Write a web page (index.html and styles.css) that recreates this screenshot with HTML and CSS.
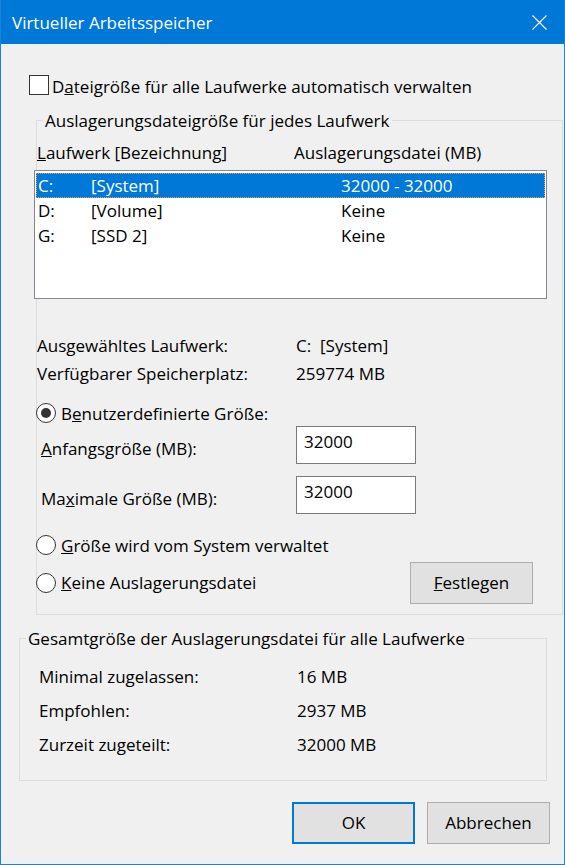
FILE: index.html
```html
<!DOCTYPE html>
<html lang="de">
<head>
    <meta charset="UTF-8">
    <meta name="viewport" content="width=device-width, initial-scale=1.0">
    <title>Virtueller Arbeitsspeicher</title>
    <link rel="stylesheet" href="styles.css">
</head>
<body>

    <div class="window">
        <div class="titlebar">
            <span class="title">Virtueller Arbeitsspeicher</span>
            <svg class="close" width="15" height="15" viewBox="0 0 15 15">
                <path d="M0.5 0.5 L14.5 14.5 M14.5 0.5 L0.5 14.5" stroke="#fff" stroke-width="1.1" fill="none"/>
            </svg>
        </div>

        <div class="auto-row">
            <span class="checkbox"></span>
            <span class="auto-label">D<u>a</u>teigröße für alle Laufwerke automatisch verwalten</span>
        </div>

        <!-- page file per drive -->
        <div class="group group-drives">
            <span class="group-title">Auslagerungsdateigröße für jedes Laufwerk</span>

            <div class="list-header">
                <span><u>L</u>aufwerk [Bezeichnung]</span>
                <span>Auslagerungsdatei (MB)</span>
            </div>

            <div class="listbox">
                <div class="list-row selected"><span>C:</span><span>[System]</span><span>32000 - 32000</span></div>
                <div class="list-row"><span>D:</span><span>[Volume]</span><span>Keine</span></div>
                <div class="list-row"><span>G:</span><span>[SSD 2]</span><span>Keine</span></div>
            </div>

            <div class="info-row first"><span>Ausgewähltes Laufwerk:</span><span>C:&nbsp; [System]</span></div>
            <div class="info-row"><span>Verfügbarer Speicherplatz:</span><span>259774 MB</span></div>

            <div class="radio-row custom">
                <span class="radio checked"></span>
                <span class="radio-label">B<u>e</u>nutzerdefinierte Größe:</span>
            </div>

            <div class="size-row first">
                <label><u>A</u>nfangsgröße (MB):</label>
                <div class="textbox">32000</div>
            </div>
            <div class="size-row">
                <label>Ma<u>x</u>imale Größe (MB):</label>
                <div class="textbox">32000</div>
            </div>

            <div class="radio-row system">
                <span class="radio"></span>
                <span class="radio-label"><u>G</u>röße wird vom System verwaltet</span>
            </div>

            <div class="radio-row none">
                <span class="radio"></span>
                <span class="radio-label"><u>K</u>eine Auslagerungsdatei</span>
                <button class="btn btn-set"><u>F</u>estlegen</button>
            </div>
        </div>

        <!-- totals -->
        <div class="group group-total">
            <span class="group-title">Gesamtgröße der Auslagerungsdatei für alle Laufwerke</span>
            <div class="total-row first"><span>Minimal zugelassen:</span><span>16 MB</span></div>
            <div class="total-row"><span>Empfohlen:</span><span>2937 MB</span></div>
            <div class="total-row"><span>Zurzeit zugeteilt:</span><span>32000 MB</span></div>
        </div>

        <div class="buttons">
            <button class="btn btn-default">OK</button>
            <button class="btn">Abbrechen</button>
        </div>
    </div>

</body>
</html>
```

FILE: styles.css
```css
body {
    margin: 0;
    font-family: "Open Sans", sans-serif;
    font-size: 17px;
    color: #000;
}

.window {
    width: 565px;
    height: 865px;
    box-sizing: border-box;
    background-color: #f0f0f0;
    border: 1px solid #1883d7;
    border-top: none;
}

.titlebar {
    height: 44px;
    box-sizing: border-box;
    padding: 13px 17px 0 11px;
    background-color: #0078d7;
    color: #fff;
    display: flex;
    justify-content: space-between;
    align-items: flex-start;
    line-height: 20px;
}

.close {
    margin-top: 2px;
}

.auto-row {
    display: flex;
    align-items: flex-start;
    margin: 31px 0 0 28px;
}

.checkbox {
    width: 20px;
    height: 20px;
    box-sizing: border-box;
    border: 1px solid #333;
    background-color: #fff;
}

.auto-label {
    margin-left: 3px;
    padding-top: 2px;
    line-height: 20px;
}

/* group boxes */
.group {
    border: 1px solid #dcdcdc;
    box-sizing: border-box;
}

.group-title {
    display: block;
    width: max-content;
    margin: -10px 0 0 6px;
    padding: 0 2px;
    line-height: 20px;
    background-color: #f0f0f0;
}

.group-drives {
    width: 527px;
    margin: 23px 0 0 35px;
    padding-bottom: 10px;
}

.list-header {
    display: grid;
    grid-template-columns: 257px auto;
    margin-top: 12px;
    line-height: 20px;
}

.listbox {
    width: 513px;
    height: 129px;
    box-sizing: border-box;
    margin: 7px 0 0 -3px;
    padding: 2px 1px;
    border: 1px solid #828790;
    background-color: #fff;
}

.list-row {
    display: grid;
    grid-template-columns: 53px 250px auto;
    height: 25px;
    line-height: 25px;
    padding-left: 2px;
}

.list-row.selected {
    background-color: #0078d7;
    color: #fff;
    outline: 1px dotted #f0a050;
    outline-offset: -1px;
}

.info-row {
    display: grid;
    grid-template-columns: 259px auto;
    line-height: 28px;
}

.info-row.first {
    margin-top: 33px;
}

.radio-row {
    display: flex;
    align-items: flex-start;
}

.radio {
    width: 20px;
    height: 20px;
    box-sizing: border-box;
    margin-left: -1px;
    border: 1px solid #333;
    border-radius: 50%;
    background-color: #fff;
    display: flex;
    align-items: center;
    justify-content: center;
}

.radio.checked::after {
    content: "";
    width: 10px;
    height: 10px;
    border-radius: 50%;
    background-color: #333;
}

.radio-label {
    margin-left: 5px;
    padding-top: 1px;
    line-height: 20px;
}

.radio-row.custom {
    margin-top: 15px;
}

.radio-row.system {
    margin-top: 21px;
}

.radio-row.none {
    margin-top: 6px;
    height: 42px;
    align-items: center;
}

.radio-row.none .radio-label {
    padding-top: 0;
}

.size-row {
    display: grid;
    grid-template-columns: 259px 120px;
    align-items: start;
    margin-top: 12px;
}

.size-row.first {
    margin-top: 2px;
}

.size-row label {
    margin-top: 13px;
    padding-left: 4px;
    line-height: 20px;
}

.textbox {
    height: 38px;
    box-sizing: border-box;
    padding: 5px 0 0 7px;
    border: 1px solid #7a7a7a;
    background-color: #fff;
    line-height: 20px;
}

.btn {
    width: 123px;
    height: 42px;
    padding: 0;
    font-family: inherit;
    font-size: 17px;
    line-height: 20px;
    color: #000;
    background-color: #e1e1e1;
    border: 1px solid #adadad;
}

.btn-set {
    margin: 0 29px 0 auto;
}

.btn-default {
    border: 2px solid #0078d7;
}

.group-total {
    width: 528px;
    margin: 23px 0 0 18px;
    padding-bottom: 18px;
}

.total-row {
    display: grid;
    grid-template-columns: 258px auto;
    padding-left: 19px;
    line-height: 34px;
}

.total-row.first {
    margin-top: 11px;
}

.buttons {
    display: flex;
    justify-content: flex-end;
    gap: 12px;
    margin: 21px 14px 0 0;
}
```
